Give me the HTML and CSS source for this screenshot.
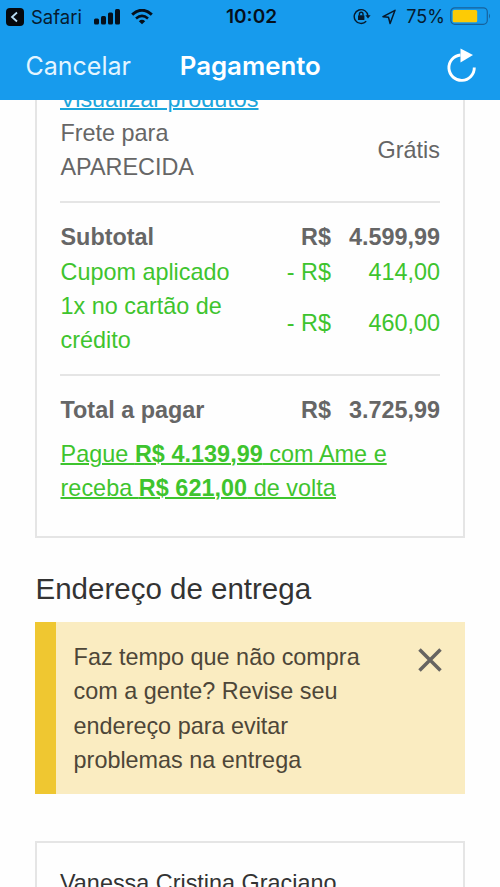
FILE: index.html
```html
<!DOCTYPE html>
<html lang="pt-BR">
<head>
<meta charset="utf-8">
<title>Pagamento</title>
<link rel="stylesheet" href="styles.css">
</head>
<body>
<header class="header">
  <div class="status">
    <div class="status-left">
      <svg class="back" width="18" height="18" viewBox="0 0 18 18"><rect width="18" height="18" rx="4" fill="#05080d"/><path d="M11 4.500 6 9l5 4.500" fill="none" stroke="#b9dcf3" stroke-width="1.800"/></svg>
      <span class="app">Safari</span>
      <svg class="signal" width="27" height="16" viewBox="0 0 27 16" fill="#05101c"><rect x="0" y="9.500" width="5" height="6" rx="1.500"/><rect x="7" y="7" width="5" height="8.500" rx="1.500"/><rect x="14" y="3.500" width="5" height="12" rx="1.500"/><rect x="21" y="0" width="5" height="15.500" rx="1.500"/></svg>
      <svg class="wifi" width="22" height="16" viewBox="0 0 22 16" fill="none" stroke="#05101c"><path d="M1.200 5.600Q11-3 20.800 5.600" stroke-width="3"/><path d="M5 9.500Q11 4.300 17 9.500" stroke-width="2.600"/><path d="M7.800 12.200Q11 9.300 14.200 12.200L11 15.300Z" fill="#05101c" stroke="none"/></svg>
    </div>
    <span class="clock">10:02</span>
    <div class="status-right">
      <svg class="lock" width="18" height="17" viewBox="0 0 18 17" fill="none" stroke="#07192b" stroke-width="1.400"><path d="M13.200 13.200A6.900 6.900 0 1 1 15 8"/><path d="M12.400 7.200h5.200L15 10.500Z" fill="#07192b" stroke="none"/><rect x="5" y="7.200" width="6.400" height="4.800" rx=".6" fill="#07192b" stroke="none"/><path d="M6.400 7.500V6a1.800 1.800 0 0 1 3.600 0v1.500"/></svg>
      <svg class="arrow" width="14" height="16" viewBox="0 0 14 16"><path d="M13 1.300 1 7.700l5.500.6 1.600 6.200Z" fill="none" stroke="#07192b" stroke-width="1.500" stroke-linejoin="round"/></svg>
      <span class="percent">75%</span>
      <svg class="battery" width="41" height="19" viewBox="0 0 41 19"><rect x=".8" y=".8" width="36.500" height="16.500" rx="4" fill="none" stroke="#17629c" stroke-width="1.200"/><rect x="2.700" y="2.900" width="24.500" height="12.300" rx="1.500" fill="#fdcb05"/><path d="M39 6.500q2 2.500 0 5.200Z" fill="#17629c"/></svg>
    </div>
  </div>
  <nav class="nav">
    <span class="cancel">Cancelar</span>
    <h1 class="title">Pagamento</h1>
    <svg class="reload" width="32" height="36" viewBox="0 0 32 36"><path d="M14.500 7A12.700 12.700 0 1 0 28.300 19.500" fill="none" stroke="#fff" stroke-width="2.900"/><path d="M14.500 .5 27 7 14.500 14.500Z" fill="#fff"/></svg>
  </nav>
</header>
<main class="content">
  <section class="card summary">
    <a class="products">Visualizar produtos</a>
    <div class="row shipping"><span>Frete para<br>APARECIDA</span><span>Grátis</span></div>
    <div class="group">
      <div class="row strong"><span>Subtotal</span><span class="price"><span>R$</span><span>4.599,99</span></span></div>
      <div class="row discount"><span>Cupom aplicado</span><span class="price"><span>- R$</span><span>414,00</span></span></div>
      <div class="row discount"><span>1x no cartão de<br>crédito</span><span class="price"><span>- R$</span><span>460,00</span></span></div>
    </div>
    <div class="group total">
      <div class="row strong"><span>Total a pagar</span><span class="price"><span>R$</span><span>3.725,99</span></span></div>
      <a class="cashback">Pague <b>R$ 4.139,99</b> com Ame e<br>receba <b>R$ 621,00</b> de volta</a>
    </div>
  </section>
  <h2 class="heading">Endereço de entrega</h2>
  <aside class="alert">
    <p>Faz tempo que não compra<br>com a gente? Revise seu<br>endereço para evitar<br>problemas na entrega</p>
    <svg class="close" width="24" height="24" viewBox="0 0 24 24"><path d="M1.500 1.500 22.500 22.500M22.500 1.500 1.500 22.500" stroke="#666461" stroke-width="3.500"/></svg>
  </aside>
  <section class="card address">Vanessa Cristina Graciano</section>
</main>
</body>
</html>
```
FILE: styles.css
```css
* { box-sizing: border-box; }
body {
  margin: 0;
  height: 887px;
  overflow: hidden;
  display: flex;
  flex-direction: column;
  background: #fefefe;
  color: #666;
  font: 23.4px/34.4px "Liberation Sans", Arial, sans-serif;
}
.header { flex: none; height: 100px; background: #179bed; }
.status {
  height: 32px;
  display: grid;
  grid-template-columns: 1fr auto 1fr;
  align-items: center;
  padding: 0 9px 0 6px;
  font: 19px/32px Inter, sans-serif;
  color: #061b30;
}
.status-left, .status-right { display: flex; align-items: center; }
.status-right { justify-content: flex-end; }
.app { margin: 0 12px 0 7px; font-size: 18.5px; }
.wifi { margin-left: 10px; }
.clock { margin-left: 6px; padding-top: 1px; font-weight: 600; font-size: 19px; color: #05101c; }
.arrow { margin: 0 10px 0 11px; }
.percent { margin-right: 5px; font-size: 18px; padding-top: 1px; }
.nav {
  height: 68px;
  display: grid;
  grid-template-columns: 1fr auto 1fr;
  align-items: center;
  padding: 0 22px 0 25.5px;
  color: #fff;
  font: 25px/68px Inter, sans-serif;
}
.cancel { color: #e3f5ff; }
.title { margin: 0 3px 0 0; font-size: 25.8px; font-weight: 600; }
.reload { justify-self: end; }
.content { flex: 1; min-height: 0; overflow: hidden; padding: 0 35px; }
.card { border: 2px solid #e5e5e5; padding: 0 23px; }
.summary { margin-top: -44px; height: 482px; padding-top: 23.5px; }
.products { display: block; color: #1aa5dc; text-decoration: underline; text-decoration-thickness: 1.5px; text-underline-offset: 1px; }
.row { display: flex; justify-content: space-between; align-items: center; }
.row > span:first-child, .cashback { padding-left: .5px; }
.shipping { margin-bottom: 16.4px; }
.group { border-top: 2px solid #e5e5e5; padding-top: 17px; }
.total { margin-top: 15.8px; }
.strong { font-weight: 700; }
.discount { color: #3ec42e; }
.price { display: grid; grid-template-columns: auto 109px; text-align: right; }
.cashback { display: block; margin-top: 9.8px; letter-spacing: .04px; color: #3ec42e; text-decoration: underline; text-decoration-thickness: 1.5px; text-underline-offset: 1px; }
.heading { margin: 31px 0 13px; padding-left: .5px; font-size: 29.5px; font-weight: 400; line-height: 40px; color: #333; }
.alert { display: flex; justify-content: space-between; height: 172px; padding: 17.8px 23px 16px 17.6px; border-left: 21px solid #efc731; background: #faecc1; color: #4d4638; }
.alert p { margin: 0; }
.close { margin-top: 8px; }
.address { margin-top: 47px; height: 180px; padding-top: 22.8px; color: #333; }
```
